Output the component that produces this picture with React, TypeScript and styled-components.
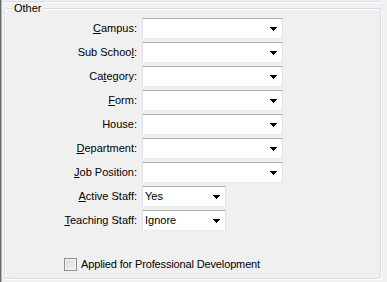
import React from "react";
import styled, { createGlobalStyle } from "styled-components";

const GlobalStyle = createGlobalStyle`
  html, body {
    margin: 0;
    padding: 0;
    background: #f0f0f0;
  }
  body {
    font-family: "Liberation Sans", Arial, sans-serif;
    font-size: 11px;
    color: #000;
  }
`;

const Page = styled.div`
  width: 385px;
  height: 282px;
  display: flex;
  flex-direction: column;
  border-left: 1px solid #656565;
  box-shadow: inset 1px 0 0 #b9b9b9;
  background: #f0f0f0;
  overflow: hidden;
`;

const PrevGroupEdge = styled.div`
  height: 1px;
  margin: 0 5px 0 2px;
  border-bottom: 1px solid #d5dfe5;
  border-right: 1px solid #d5dfe5;
  border-bottom-right-radius: 3px;
  box-shadow: 1px 1px 0 #fff;
`;

const Group = styled.div`
  position: relative;
  flex: 1;
  margin: 6px 5px 3px 3px;
  padding: 9px 0 0 0;
  border: 1px solid #d5dfe5;
  border-radius: 3px;
  box-shadow: inset 1px 1px 0 #fff, 1px 1px 0 #fff;
`;

const Caption = styled.span`
  position: absolute;
  top: -7px;
  left: 7px;
  padding: 0 2px;
  line-height: 13px;
  background: #f0f0f0;
`;

const Fields = styled.div`
  display: grid;
  grid-template-columns: 132px auto;
  column-gap: 5px;
  row-gap: 3px;
  align-items: center;
  justify-items: start;
`;

const Label = styled.label`
  justify-self: end;
  white-space: nowrap;
  line-height: 13px;
`;

const Key = styled.span`
  text-decoration: underline;
  text-underline-offset: 1px;
`;

const Select = styled.div<{ $width: number }>`
  box-sizing: border-box;
  width: ${(p) => p.$width}px;
  height: 21px;
  display: flex;
  align-items: center;
  justify-content: space-between;
  padding: 0 5px 0 2px;
  background: #fff;
  border: 1px solid #e2e3ea;
  border-top-color: #abadb3;
  border-bottom-color: #e3e9ef;
`;

const Value = styled.span`
  line-height: 13px;
`;

const Arrow = styled.svg`
  display: block;
  flex: none;
`;

const CheckRow = styled.label`
  display: flex;
  align-items: center;
  gap: 4px;
  margin-top: 27px;
  padding-left: 59px;
  line-height: 13px;
`;

const CheckBox = styled.span`
  box-sizing: border-box;
  width: 13px;
  height: 13px;
  border: 1px solid #8e8f8f;
  box-shadow: inset 0 0 0 1px #f4f4f4;
  background: linear-gradient(135deg, #dcdcdc 0%, #f2f2f2 100%);
`;

const CheckText = styled.span`
  letter-spacing: -0.14px;
`;

const DropArrow = () => (
  <Arrow width="7" height="4" viewBox="0 0 7 4" shapeRendering="crispEdges">
    <path
      d="M0 0h7v1h-1v1h-1v1h-1v1h-1v-1h-1v-1h-1v-1h-1z"
      fill="#000"
    />
  </Arrow>
);

type Field = {
  pre: string;
  key: string;
  post: string;
  value?: string;
  width: number;
};

const FIELDS: Field[] = [
  { pre: "", key: "C", post: "ampus:", width: 141 },
  { pre: "Sub Schoo", key: "l", post: ":", width: 141 },
  { pre: "Ca", key: "t", post: "egory:", width: 141 },
  { pre: "", key: "F", post: "orm:", width: 141 },
  { pre: "House:", key: "", post: "", width: 141 },
  { pre: "", key: "D", post: "epartment:", width: 141 },
  { pre: "", key: "J", post: "ob Position:", width: 141 },
  { pre: "", key: "A", post: "ctive Staff:", value: "Yes", width: 84 },
  { pre: "", key: "T", post: "eaching Staff:", value: "Ignore", width: 84 },
];

export default function App() {
  return (
    <>
      <GlobalStyle />
      <Page>
        <PrevGroupEdge />
        <Group>
          <Caption>Other</Caption>
          <Fields>
            {FIELDS.map((f, i) => (
              <React.Fragment key={i}>
                <Label>
                  {f.pre}
                  {f.key && <Key>{f.key}</Key>}
                  {f.post}
                </Label>
                <Select $width={f.width}>
                  <Value>{f.value ?? ""}</Value>
                  <DropArrow />
                </Select>
              </React.Fragment>
            ))}
          </Fields>
          <CheckRow>
            <CheckBox />
            <CheckText>Applied for Professional Development</CheckText>
          </CheckRow>
        </Group>
      </Page>
    </>
  );
}
